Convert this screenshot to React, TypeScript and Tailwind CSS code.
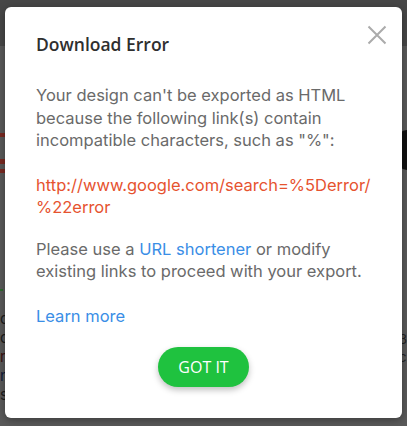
import React from 'react';

function CloseIcon() {
  return (
    <svg width="20" height="20" viewBox="0 0 20 20" fill="none" stroke="#ababab" strokeWidth="2" strokeLinecap="butt">
      <path d="M1.5 1.5 L18.5 18.5 M18.5 1.5 L1.5 18.5" />
    </svg>
  );
}

export default function App() {
  return (
    <div className="relative w-full h-[426px] overflow-hidden bg-[#5a5a5a] font-['Inter',sans-serif]">
      {/* Dimmed page behind the dialog */}
      <div className="h-[46px] bg-[#474747]" />
      <div className="flex justify-between">
        <div className="flex flex-col pt-[87px] w-[8px]">
          <div className="h-[4px] bg-[#7a2a22]" />
          <div className="h-[22px]" />
          <div className="h-[5px] bg-[#7a2a22]" />
          <div className="h-[5px]" />
          <div className="h-[4px] bg-[#7a2a22]" />
          <div className="h-[116px]" />
          <div className="h-[2px] w-[3px] bg-[#2d6b2d]" />
          <div className="flex flex-col pt-[18px] text-[15px] leading-[19px] text-[#1c1c1c]">
            <span>c</span>
            <span>o</span>
            <span className="text-[#3a1010]">r</span>
            <span className="text-[#101a3a]">n</span>
            <span>s</span>
          </div>
        </div>
        <div className="flex flex-col items-end pt-[84px] w-[12px]">
          <div className="h-[40px] w-[10px] rounded-l-full bg-[#111]" />
          <div className="h-[160px]" />
          <div className="flex flex-col text-[13px] leading-[18px] text-[#222]">
            <span>3</span>
            <span>c</span>
          </div>
        </div>
      </div>

      {/* Dialog */}
      <div className="absolute inset-0 flex justify-center pt-[7px]">
        <div className="relative w-[397px] h-[411px] bg-white rounded-[6px] shadow-[0_2px_8px_rgba(0,0,0,0.35)] pl-[31px] pr-[20px] pt-[25px]">
          <button className="absolute right-[15px] top-[18px] p-0" aria-label="Close">
            <CloseIcon />
          </button>

          <h3 className="font-['Open_Sans',sans-serif] font-semibold text-[17.5px] leading-[24px] text-[#2f2f2f]">
            Download Error
          </h3>

          <div className="mt-[28px] text-[16.5px] leading-[22.5px] text-[#6a6a6a]">
            <p>
              Your design can't be exported as HTML because the following link(s) contain
              incompatible characters, such as "%":
            </p>

            <p className="mt-[22px] text-[#e6532f] break-all pr-[10px]">
              http://www.google.com/search=%5Derror/ %22error
            </p>

            <p className="mt-[19px]">
              Please use a <span className="text-[#3a8ee6]">URL shortener</span> or modify
              existing links to proceed with your export.
            </p>

            <p className="mt-[22px] text-[#3a8ee6]">Learn more</p>
          </div>

          <div className="flex justify-center mt-[20px] pr-[11px]">
            <button className="h-[40px] px-[20px] rounded-full bg-[#1fc23f] text-white font-['Open_Sans',sans-serif] text-[16px] shadow-[0_3px_6px_rgba(0,0,0,0.25)]">
              GOT IT
            </button>
          </div>
        </div>
      </div>
    </div>
  );
}
